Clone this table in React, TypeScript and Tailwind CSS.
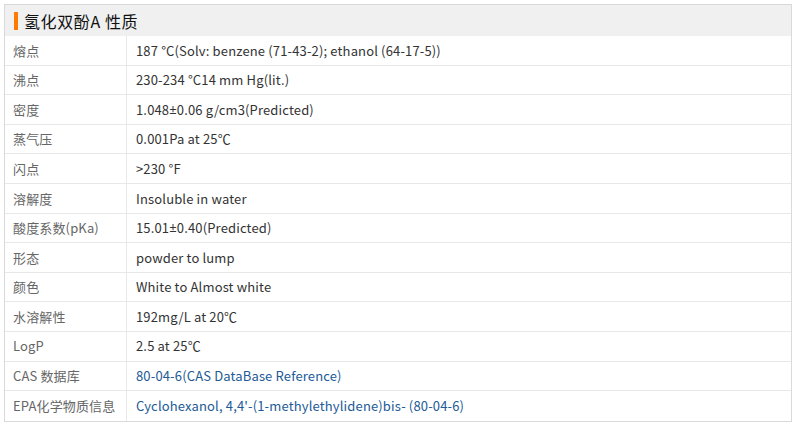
import React from "react";

type Row = { label: string; value: React.ReactNode; link?: boolean };

const Pm = () => <span style={{ fontFamily: '"Noto Sans", sans-serif' }}>±</span>;

const rows: Row[] = [
  { label: "熔点", value: "187 °C(Solv: benzene (71-43-2); ethanol (64-17-5))" },
  { label: "沸点", value: "230-234 °C14 mm Hg(lit.)" },
  { label: "密度", value: <>1.048<Pm />0.06 g/cm3(Predicted)</> },
  { label: "蒸气压", value: "0.001Pa at 25℃" },
  { label: "闪点", value: ">230 °F" },
  { label: "溶解度", value: "Insoluble in water" },
  { label: "酸度系数(pKa)", value: <>15.01<Pm />0.40(Predicted)</> },
  { label: "形态", value: "powder to lump" },
  { label: "颜色", value: "White to Almost white" },
  { label: "水溶解性", value: "192mg/L at 20℃" },
  { label: "LogP", value: "2.5 at 25℃" },
  { label: "CAS 数据库", value: "80-04-6(CAS DataBase Reference)", link: true },
  {
    label: "EPA化学物质信息",
    value: "Cyclohexanol, 4,4'-(1-methylethylidene)bis- (80-04-6)",
    link: true,
  },
];

export default function App() {
  return (
    <div
      className="w-[796px] h-[424px] bg-white p-1"
      style={{ fontFamily: '"Noto Sans CJK SC", "Noto Sans", sans-serif' }}
    >
      <div className="w-[788px] border border-[#d9d9d9]">
        {/* header */}
        <div className="h-[31px] bg-[#f0f0f0] flex items-center pl-[9px]">
          <span className="w-[4px] h-[18px] bg-[#ff7a00] mr-[6px]" />
          <span className="text-[16px] text-[#111] leading-none tracking-[0.6px]">氢化双酚A 性质</span>
        </div>

        {rows.map((r, i) => (
          <div
            key={r.label}
            className={`flex h-[29.6px] text-[13px] tracking-[0.15px] ${
              i < rows.length - 1 ? "border-b border-[#e8e8e8]" : ""
            }`}
          >
            <div className="w-[122px] shrink-0 border-r border-[#e8e8e8] pl-[8px] flex items-center text-[#666]">
              {r.label}
            </div>
            <div
              className={`flex-1 pl-[9px] flex items-center whitespace-pre ${
                r.link ? "text-[#225a96]" : "text-[#333]"
              }`}
            >
              {r.value}
            </div>
          </div>
        ))}
      </div>
    </div>
  );
}
